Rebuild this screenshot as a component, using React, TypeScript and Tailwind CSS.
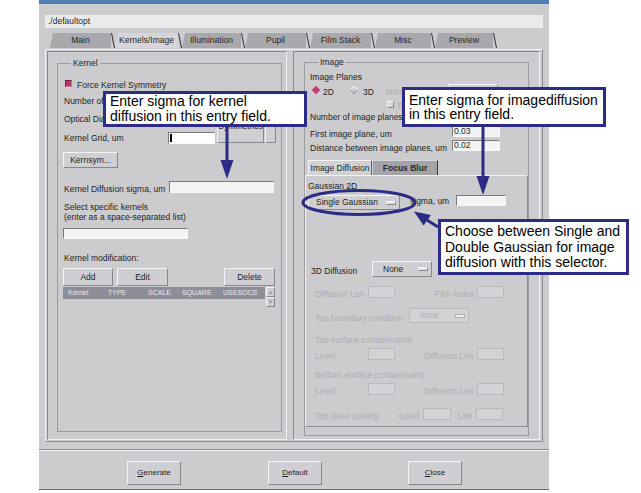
import React from "react";

const raised =
  "border border-t-[#f4f4f6] border-l-[#f4f4f6] border-b-[#86868c] border-r-[#86868c] bg-[#cfcfd3]";
const sunken =
  "border border-t-[#7a7a80] border-l-[#7a7a80] border-b-[#f8f8f8] border-r-[#f8f8f8] bg-[#f3f3f3]";
const disabledBox = "border border-[#b9b9be] bg-[#d3d3d7]";

function Label({ children, dim }: { children: React.ReactNode; dim?: boolean }) {
  return (
    <span className={`text-[8.5px] leading-[10px] whitespace-nowrap ${dim ? "text-[#acacb1]" : "text-[#1e1e1e]"}`}>
      {children}
    </span>
  );
}

function Indicator() {
  return <span className={`${raised} w-[10px] h-[4px] bg-[#e4e4e6]`} />;
}

const tabs = [
  { label: "Main", w: "w-[61px]" },
  { label: "Kernels/Image", w: "w-[63px]", active: true },
  { label: "Illumination", w: "w-[59px]" },
  { label: "Pupil", w: "w-[61px]" },
  { label: "Film Stack", w: "w-[61px]" },
  { label: "Misc", w: "w-[56px]" },
  { label: "Preview", w: "w-[58px]" },
];

function Tabs() {
  return (
    <div className="mt-[5px] h-[15px] pl-[11px] flex">
      {tabs.map((t) => (
        <div key={t.label} className="flex h-[15px]">
          <div
            className={`${t.w} h-[15px] flex items-center justify-center text-[8.5px] [clip-path:polygon(3px_0,100%_0,100%_100%,0_100%)] ${
              t.active ? "bg-[#d6d6da] text-[#1e1e1e]" : "bg-[#a9a9ad] text-[#262626]"
            }`}
          >
            {t.label}
          </div>
          <svg width="4" height="15" className="block">
            <line x1="0.5" y1="0" x2="3.5" y2="15" stroke="#2e2e30" strokeWidth="1" />
          </svg>
        </div>
      ))}
    </div>
  );
}

function LeftPane() {
  return (
    <div className="ml-[1px] w-[240px] h-[389px] border border-t-[#8a8a90] border-l-[#8a8a90] border-b-[#f2f2f4] border-r-[#f2f2f4] pt-[11px]">
      <div className="relative ml-[9px] w-[225px] h-[369px] border border-[#9a9aa0]">
        <span className="absolute -top-[6px] left-[13px] px-[2px] bg-[#cccccf] text-[8.5px] leading-[10px]">Kernel</span>
        <div className="flex flex-col pl-[6px]">
          <div className="mt-[12px] h-[14px] flex items-center">
            <span className="ml-[1px] w-[7px] h-[7px] bg-[#b23a64] border border-t-[#7a2040] border-l-[#7a2040] border-b-[#e06a90] border-r-[#e06a90]" />
            <span className="ml-[5px]">
              <Label>Force Kernel Symmetry</Label>
            </span>
          </div>
          <div className="mt-[4px] h-[14px] flex items-center">
            <Label>Number of kernels</Label>
          </div>
          <div className="mt-[4px] h-[14px] flex items-center">
            <Label>Optical Diameter</Label>
          </div>
          <div className="mt-[2px] h-[18px] flex items-start">
            <span className="w-[104px] mt-[4px] h-[12px] flex items-center">
              <Label>Kernel Grid, um</Label>
            </span>
            <div className={`${sunken} mt-[4px] w-[47px] h-[12px] flex items-center bg-white`}>
              <span className="ml-[1px] w-[2px] h-[8px] bg-black" />
            </div>
            <div className={`${raised} ml-[2px] -mt-[8px] w-[47px] h-[23px] text-[8.5px] leading-[10px] text-center`}>
              Symmetrics
            </div>
            <div className={`${raised} ml-[1px] -mt-[8px] w-[11px] h-[23px]`} />
          </div>
          <div className={`${raised} mt-[6px] -ml-[1px] w-[55px] h-[16px] flex items-center justify-center text-[8.5px]`}>
            Kernsym...
          </div>
          <div className="mt-[12px] h-[13px] flex items-center">
            <span className="w-[105px]">
              <Label>Kernel Diffusion sigma, um</Label>
            </span>
            <div className={`${sunken} w-[105px] h-[12px]`} />
          </div>
          <div className="mt-[9px] flex flex-col text-[8.5px] leading-[10px]">
            <span>Select specific kernels</span>
            <span>(enter as a space-separated list)</span>
          </div>
          <div className={`${sunken} mt-[6px] -ml-[1px] w-[125px] h-[11px]`} />
          <div className="mt-[14px] h-[10px] flex items-center">
            <Label>Kernel modification:</Label>
          </div>
          <div className="mt-[5px] h-[18px] flex -ml-[1px]">
            <div className={`${raised} w-[50px] h-[18px] flex items-center justify-center text-[8.5px]`}>Add</div>
            <div className={`${raised} ml-[4px] w-[51px] h-[18px] flex items-center justify-center text-[8.5px]`}>Edit</div>
            <div className={`${raised} ml-[56px] w-[51px] h-[18px] flex items-center justify-center text-[8.5px]`}>Delete</div>
          </div>
          <div className="mt-[1px] h-[20px] flex -ml-[1px]">
            <div className="w-[202px] h-[12px] bg-[#8e8e96] flex items-center text-[7px] text-[#e8e8ec]">
              <span className="ml-[5px] w-[40px]">Kernel</span>
              <span className="w-[40px]">TYPE</span>
              <span className="w-[34px]">SCALE</span>
              <span className="w-[41px]">SQUARE</span>
              <span>USESOCS</span>
            </div>
            <div className="ml-[1px] w-[9px] flex flex-col">
              <div className={`${raised} h-[10px] flex items-center justify-center text-[6px] text-[#9a9aa0]`}>▲</div>
              <div className={`${raised} h-[10px] flex items-center justify-center text-[6px] text-[#9a9aa0]`}>▼</div>
            </div>
          </div>
        </div>
      </div>
    </div>
  );
}

function DisEntry({ w }: { w: string }) {
  return <div className={`${disabledBox} ${w} h-[12px]`} />;
}

function RightPane() {
  return (
    <div className="ml-[6px] w-[247px] h-[389px] border border-t-[#8a8a90] border-l-[#8a8a90] border-b-[#f2f2f4] border-r-[#f2f2f4] pt-[10px]">
      <div className="relative ml-[10px] w-[225px] h-[374px] border border-[#9a9aa0]">
        <span className="absolute -top-[6px] left-[13px] px-[2px] bg-[#cccccf] text-[8.5px] leading-[10px]">Image</span>
        <div className="flex flex-col">
          <div className="mt-[9px] h-[10px] pl-[5px] flex items-center">
            <Label>Image Planes</Label>
          </div>
          <div className="mt-[2px] h-[12px] pl-[6px] flex items-center">
            <span className="w-[9px] h-[9px] flex items-center justify-center">
              <span className="w-[6px] h-[6px] rotate-45 bg-[#c43a6c]" />
            </span>
            <span className="ml-[3px] w-[26px]">
              <Label>2D</Label>
            </span>
            <span className="w-[9px] h-[9px] flex items-center justify-center">
              <span className="w-[6px] h-[6px] rotate-45 border border-t-[#f4f4f6] border-l-[#f4f4f6] border-b-[#9a9aa0] border-r-[#9a9aa0]" />
            </span>
            <span className="ml-[5px] w-[23px]">
              <Label>3D</Label>
            </span>
            <span className="w-[62px]">
              <Label dim>Normalize</Label>
            </span>
            <div className={`${raised} w-[50px] h-[12px]`} />
          </div>
          <div className="mt-[3px] h-[10px] pl-[82px] flex items-center">
            <span className={`${raised} w-[7px] h-[7px] bg-[#d8d8dc]`} />
            <span className="ml-[4px]">
              <Label dim>Relative</Label>
            </span>
          </div>
          <div className="mt-[3px] h-[10px] pl-[5px] flex items-center">
            <Label>Number of image planes</Label>
          </div>
          <div className="mt-[4px] h-[11px] pl-[5px] flex items-center">
            <span className="w-[142px]">
              <Label>First image plane, um</Label>
            </span>
            <div className={`${sunken} w-[48px] h-[11px] flex items-center pl-[1px] text-[8.5px]`}>0.03</div>
          </div>
          <div className="mt-[3px] h-[11px] pl-[5px] flex items-center">
            <span className="w-[142px]">
              <Label>Distance between image planes, um</Label>
            </span>
            <div className={`${sunken} w-[48px] h-[11px] flex items-center pl-[1px] text-[8.5px]`}>0.02</div>
          </div>
          <div className="mt-[9px] h-[15px] pl-[3px] flex">
            <div className="w-[64px] h-[15px] border border-b-0 border-t-[#f4f4f6] border-l-[#f4f4f6] border-r-[#5e5e64] bg-[#d2d2d6] flex items-center justify-center text-[8.5px]">
              Image Diffusion
            </div>
            <div className="w-[66px] h-[15px] border border-b-0 border-t-[#d8d8dc] border-l-[#d8d8dc] border-r-[#3a3a3e] bg-[#a4a4a8] flex items-center justify-center text-[8.5px] font-bold text-[#2a2a2a]">
              Focus Blur
            </div>
          </div>
          <div className="w-[223px] h-[252px] border border-t-[#f2f2f4] border-l-[#f2f2f4] border-b-[#8a8a90] border-r-[#8a8a90] flex flex-col">
            <div className="mt-[5px] h-[10px] pl-[2px] flex items-center">
              <Label>Gaussian 2D</Label>
            </div>
            <div className="mt-[4px] h-[15px] pl-[2px] flex items-start">
              <div className={`${raised} w-[92px] h-[15px] flex items-center justify-between pl-[7px] pr-[3px] text-[8.5px]`}>
                Single Gaussian
                <Indicator />
              </div>
              <span className="ml-[10px] w-[46px] h-[11px] flex items-center">
                <Label>sigma, um</Label>
              </span>
              <div className={`${sunken} w-[50px] h-[11px]`} />
            </div>
            <div className="mt-[51px] h-[16px] pl-[5px] flex items-center">
              <span className="w-[61px]">
                <Label>3D Diffusion</Label>
              </span>
              <div className={`${raised} w-[60px] h-[16px] flex items-center justify-between pl-[10px] pr-[3px] text-[8.5px]`}>
                None
                <Indicator />
              </div>
            </div>
            <div className="mt-[9px] h-[12px] pl-[9px] flex items-center">
              <span className="w-[53px]">
                <Label dim>Diffusion Len</Label>
              </span>
              <DisEntry w="w-[27px]" />
              <span className="ml-[40px] w-[42px]">
                <Label dim>Film Index</Label>
              </span>
              <DisEntry w="w-[27px]" />
            </div>
            <div className="mt-[10px] h-[15px] pl-[9px] flex items-center">
              <span className="w-[94px]">
                <Label dim>Top boundary condition</Label>
              </span>
              <div className={`${disabledBox} w-[60px] h-[15px] flex items-center justify-between pl-[10px] pr-[3px] text-[8.5px] text-[#acacb1]`}>
                none
                <span className="w-[10px] h-[4px] bg-[#ececee] border border-[#b0b0b4]" />
              </div>
            </div>
            <div className="mt-[12px] h-[10px] pl-[9px] flex items-center">
              <Label dim>Top surface contaminants</Label>
            </div>
            <div className="mt-[3px] h-[12px] pl-[9px] flex items-center">
              <span className="w-[53px]">
                <Label dim>Level</Label>
              </span>
              <DisEntry w="w-[27px]" />
              <span className="ml-[29px] w-[53px]">
                <Label dim>Diffusion Len</Label>
              </span>
              <DisEntry w="w-[27px]" />
            </div>
            <div className="mt-[10px] h-[10px] pl-[9px] flex items-center">
              <Label dim>Bottom surface contaminants</Label>
            </div>
            <div className="mt-[3px] h-[12px] pl-[9px] flex items-center">
              <span className="w-[53px]">
                <Label dim>Level</Label>
              </span>
              <DisEntry w="w-[27px]" />
              <span className="ml-[29px] w-[53px]">
                <Label dim>Diffusion Len</Label>
              </span>
              <DisEntry w="w-[27px]" />
            </div>
            <div className="mt-[12px] h-[13px] pl-[9px] flex items-center">
              <span className="w-[84px]">
                <Label dim>Top dose scaling</Label>
              </span>
              <span className="w-[24px]">
                <Label dim>Level</Label>
              </span>
              <DisEntry w="w-[28px]" />
              <span className="ml-[7px] w-[18px]">
                <Label dim>Len</Label>
              </span>
              <DisEntry w="w-[27px]" />
            </div>
          </div>
        </div>
      </div>
    </div>
  );
}

function Callouts() {
  const box = "absolute bg-white border-[3px] border-[#2c2c86] text-[14px] text-black px-[4px]";
  return (
    <>
      <div className={`${box} left-[103px] top-[91px] w-[204px] h-[36px] leading-[15px]`}>
        Enter sigma for kernel
        <br />
        diffusion in this entry field.
      </div>
      <div className={`${box} left-[402px] top-[87px] w-[204px] h-[40px] leading-[14px] pt-[3px]`}>
        Enter sigma for imagediffusion
        <br />
        in this entry field.
      </div>
      <div className={`${box} left-[438px] top-[219px] w-[191px] h-[56px] leading-[15.5px] pt-[2px]`}>
        Choose between Single and
        <br />
        Double Gaussian for image
        <br />
        diffusion with this selector.
      </div>
      <svg className="absolute left-0 top-0 pointer-events-none" width="641" height="493">
        <line x1="227" y1="127" x2="227" y2="162" stroke="#2c2c86" strokeWidth="3" />
        <polygon points="220.5,160 233.5,160 227,179" fill="#2c2c86" />
        <line x1="483" y1="127" x2="483" y2="178" stroke="#2c2c86" strokeWidth="3" />
        <polygon points="476.5,176 489.5,176 483,195" fill="#2c2c86" />
        <ellipse cx="359" cy="202.5" rx="56" ry="12" fill="none" stroke="#2c2c86" strokeWidth="3" />
        <line x1="438" y1="227" x2="427" y2="220" stroke="#2c2c86" strokeWidth="3" />
        <polygon points="414,211.5 431,215 423.5,225.5" fill="#2c2c86" />
      </svg>
    </>
  );
}

export default function App() {
  return (
    <div className="relative w-[641px] h-[493px] bg-white overflow-hidden font-['Liberation_Sans',Arial,sans-serif] text-[#1e1e1e]">
      <div className="ml-[39px] w-[510px] h-[490px] bg-[#cccccf] flex flex-col border-b border-[#6a6a70]">
        <div className="h-[4px] bg-[#4f7db6]" />
        <div className="mt-[11px] mx-[6px] h-[13px] bg-[#ebebed] pl-[3px] text-[8.5px] leading-[13px]">./defaultopt</div>
        <Tabs />
        <div className="mt-[1px] mx-[6px] h-[393px] border border-t-[#f2f2f4] border-l-[#f2f2f4] border-b-[#8a8a90] border-r-[#8a8a90] flex pt-[1px]">
          <LeftPane />
          <RightPane />
        </div>
        <div className="mt-[7px] h-[2px] border-t border-t-[#8a8a90] border-b border-b-[#f2f2f4]" />
        <div className="mt-[10px] h-[24px] pl-[88px] flex text-[8px]">
          <div className={`${raised} w-[54px] h-[24px] flex items-center justify-center`}>
            <span className="underline">G</span>enerate
          </div>
          <div className={`${raised} ml-[87px] w-[54px] h-[24px] flex items-center justify-center`}>
            <span className="underline">D</span>efault
          </div>
          <div className={`${raised} ml-[86px] w-[54px] h-[24px] flex items-center justify-center`}>
            <span className="underline">C</span>lose
          </div>
        </div>
      </div>
      <Callouts />
    </div>
  );
}
